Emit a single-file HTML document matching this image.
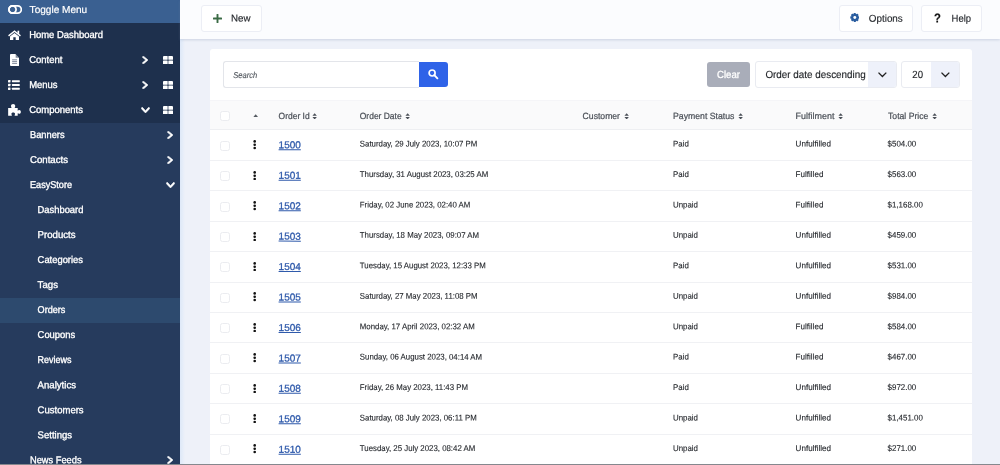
<!DOCTYPE html>
<html lang="en"><head><meta charset="utf-8"><title>Orders</title>
<style>
*{box-sizing:border-box;margin:0;padding:0}
html,body{width:1000px;height:465px;overflow:hidden}
body{font-family:"Liberation Sans",sans-serif;background:#eef1f9;position:relative;color:#212529}
div,svg,span,a{position:absolute}
.t{white-space:nowrap;height:20px;line-height:20px;transform-origin:0 50%}
#w{left:0;top:0;width:1000px;height:465px;will-change:transform}
#side{left:0;top:0;width:180px;height:465px;background:#1e304d}
#tog{left:0;top:0;width:180px;height:22.5px;background:#3a6091}
#sub{left:0;top:122.5px;width:180px;height:343px;background:#263b5d}
#act{left:0;top:297.5px;width:180px;height:25.5px;background:#2d4a6e}
#strip{left:180px;top:38px;width:5px;height:427px;background:linear-gradient(90deg,#dce7f7,rgba(238,241,249,0))}
#top{left:180px;top:0;width:820px;height:38.6px;background:#fbfcfe;box-shadow:0 1px 2.5px rgba(120,135,170,.28)}
.btn{top:5px;height:26.5px;background:#fff;border:1px solid #eceef5;border-radius:3px}
#card{left:210.3px;top:49px;width:761.7px;height:420px;background:#fff;border-radius:3px 3px 0 0}
#bottom{left:0;top:464.3px;width:1000px;height:.7px;background:#85888e}
#search{left:222.7px;top:61.1px;width:196px;height:26.6px;border:1px solid #e3e5ea;border-right:none;border-radius:3px 0 0 3px;background:#fff}
#sbtn{left:418.5px;top:61.7px;width:29.7px;height:25.5px;background:#2f63e8;border-radius:0 3px 3px 0}
#clear{left:706.9px;top:61.5px;width:42.9px;height:25.7px;background:#a9adb9;border-radius:3px}
.sel{top:61.2px;height:26.5px;border:1px solid #e9ebf1;border-radius:3px;background:#fff;overflow:hidden}
.sel i{position:absolute;right:0;top:0;bottom:0;background:#eef1fa}
#th{left:210.3px;top:99.6px;width:761.7px;height:30.7px;background:#fafafb;border-top:1px solid #f5f5f8;border-bottom:1px solid #eeeff2}
.rl{left:210.3px;width:761.7px;height:1px;background:#f0f1f4}
.cb{left:220.4px;width:10px;height:10px;border:1px solid #ebecf0;border-radius:2.5px;background:#fff}
.dots{left:253px;width:3.2px}
.dots b{display:block;width:3.2px;height:2.7px;border-radius:50%;background:#111;margin-bottom:.45px}
</style></head><body>
<div id="w">
<svg width="0" height="0"><defs>
<symbol id="cr" viewBox="10 23 290 466" preserveAspectRatio="none"><path stroke="#fff" stroke-width="30" stroke-linejoin="round" d="M285.476 272.971L91.132 467.314c-9.373 9.373-24.569 9.373-33.941 0l-22.667-22.667c-9.357-9.357-9.375-24.522-.04-33.901L188.505 256 34.484 101.255c-9.335-9.379-9.317-24.544.04-33.901l22.667-22.667c9.373-9.373 24.569-9.373 33.941 0L285.475 239.03c9.373 9.372 9.373 24.568.001 33.941z"/></symbol>
<symbol id="cd" viewBox="-9 109 466 294" preserveAspectRatio="none"><path stroke="#fff" stroke-width="30" stroke-linejoin="round" d="M207.029 381.476L12.686 187.132c-9.373-9.373-9.373-24.569 0-33.941l22.667-22.667c9.357-9.357 24.522-9.375 33.901-.04L224 284.505l154.745-154.021c9.379-9.335 24.544-9.317 33.901.04l22.667 22.667c9.373 9.373 9.373 24.569 0 33.941L240.971 381.476c-9.373 9.372-24.569 9.372-33.942 0z"/></symbol>
<symbol id="grid" viewBox="0 0 10 8.4" preserveAspectRatio="none"><rect x="0" y="0" width="4.65" height="3.85" rx=".5"/><rect x="5.35" y="0" width="4.65" height="3.85" rx=".5"/><rect x="0" y="4.55" width="4.65" height="3.85" rx=".5"/><rect x="5.35" y="4.55" width="4.65" height="3.85" rx=".5"/></symbol>
<symbol id="sort" viewBox="0 0 5 7"><path d="M0.2 2.9 L2.5 0.3 L4.8 2.9 Z M0.2 4.1 L2.5 6.7 L4.8 4.1 Z"/></symbol>
<symbol id="sr" viewBox="0 0 512 512"><path d="M505 442.7L405.3 343c-4.5-4.5-10.6-7-17-7H372c27.6-35.3 44-79.700 44-128C416 93.100 322.900 0 208 0S0 93.100 0 208s93.100 208 208 208c48.300 0 92.700-16.400 128-44v16.300c0 6.400 2.500 12.500 7 17l99.700 99.700c9.400 9.400 24.600 9.400 33.900 0l28.300-28.300c9.400-9.400 9.400-24.600.1-34zM208 336c-70.700 0-128-57.200-128-128 0-70.700 57.200-128 128-128 70.700 0 128 57.200 128 128 0 70.700-57.200 128-128 128z"/></symbol>
</defs></svg>
<div id="side"></div><div id="tog"></div><div id="sub"></div><div id="act"></div>
<svg style="left:7.9px;top:5px" width="14.2" height="9" viewBox="0 0 14.2 9" fill="none" stroke="#fff" stroke-width="1.7"><rect x=".9" y=".9" width="12.4" height="7.2" rx="3.6"/><circle cx="4.5" cy="4.5" r="3.6"/></svg>
<svg style="left:7.7px;top:29.7px" width="13" height="10.4" viewBox="0 0 13 10.4" fill="#fff" ><path d="M6.5 0.2 L12.9 5.3 L12 6.5 L6.5 2.1 L1 6.5 L0.1 5.3 Z"/><path d="M6.5 3 L11 6.6 V10.4 H7.7 V7.3 H5.3 V10.4 H2 V6.6 Z"/><rect x="9.5" y="0.7" width="1.7" height="3.2"/></svg>
<svg style="left:9.9px;top:53.9px" width="9.2" height="12" viewBox="0 0 9.5 11.5" fill="#fff" preserveAspectRatio="none"><path fill="#fff" d="M1 0 H5.6 L9.5 3.9 V10.5 Q9.5 11.5 8.5 11.5 H1 Q0 11.5 0 10.5 V1 Q0 0 1 0 Z"/><path fill="#1e304d" d="M5.9 0.2 V3.6 H9.3 Z" opacity=".55"/><path stroke="#1e304d" stroke-width=".8" opacity=".7" d="M2.2 5.6H7.3M2.2 7.3H7.3M2.2 9H7.3"/></svg>
<svg style="left:8.4px;top:80px" width="11.8" height="10" viewBox="0 0 11.8 10" fill="#fff" ><rect x="0" y="0" width="2.5" height="2.5" rx=".4"/><rect x="0" y="3.75" width="2.5" height="2.5" rx=".4"/><rect x="0" y="7.5" width="2.5" height="2.5" rx=".4"/><rect x="3.9" y="0.3" width="7.9" height="1.9" rx=".4"/><rect x="3.9" y="4.05" width="7.9" height="1.9" rx=".4"/><rect x="3.9" y="7.8" width="7.9" height="1.9" rx=".4"/></svg>
<svg style="left:7.5px;top:104.3px" width="13" height="11.7" viewBox="0 0 12.5 11.5" fill="#fff" ><path d="M0 4 H3.3 C3.3 3.2 2.8 2.9 2.8 2 C2.8 0.9 3.7 0 4.9 0 C6.1 0 7 0.9 7 2 C7 2.9 6.5 3.2 6.5 4 H9.4 V6.6 C10 6.6 10.3 6 11 6 C11.9 6 12.5 6.8 12.5 7.8 C12.5 8.8 11.9 9.6 11 9.6 C10.3 9.6 10 9 9.4 9 V11.5 H6.3 C6.3 10.8 6.8 10.5 6.8 9.8 C6.8 9 6 8.4 5 8.4 C4 8.4 3.2 9 3.2 9.8 C3.2 10.5 3.7 10.8 3.7 11.5 H0 Z"/></svg>
<svg style="left:142.3px;top:55.95px" width="6.1" height="8.1" fill="#fff"><use href="#cr"/></svg>
<svg style="left:142.3px;top:80.95px" width="6.1" height="8.1" fill="#fff"><use href="#cr"/></svg>
<svg style="left:141px;top:106.9px" width="9" height="6.2" fill="#fff"><use href="#cd"/></svg>
<svg style="left:162.8px;top:55.8px" width="10" height="8.4" fill="#fff"><use href="#grid"/></svg>
<svg style="left:162.8px;top:80.8px" width="10" height="8.4" fill="#fff"><use href="#grid"/></svg>
<svg style="left:162.8px;top:106.0px" width="10" height="8.4" fill="#fff"><use href="#grid"/></svg>
<svg style="left:167.4px;top:131.14999999999998px" width="6.1" height="8.1" fill="#fff"><use href="#cr"/></svg>
<svg style="left:167.4px;top:156.14999999999998px" width="6.1" height="8.1" fill="#fff"><use href="#cr"/></svg>
<svg style="left:167.4px;top:456.15px" width="6.1" height="8.1" fill="#fff"><use href="#cr"/></svg>
<svg style="left:165.9px;top:182.2px" width="9" height="6.2" fill="#fff"><use href="#cd"/></svg>
<div id="strip"></div><div id="top"></div>
<div class="btn" style="left:200.5px;width:61px"></div><div class="btn" style="left:838.5px;width:74.5px"></div><div class="btn" style="left:920.5px;width:61px"></div>
<svg style="left:212.5px;top:13.5px" width="9" height="9" viewBox="0 0 9 9" fill="#3b6b45" ><rect x="3.55" y="0" width="1.9" height="9" rx=".5"/><rect x="0" y="3.55" width="9" height="1.9" rx=".5"/></svg>
<svg style="left:849.5px;top:13.4px" width="9.6" height="9" viewBox="0 0 9.8 9.5" fill="#2a5d9f" ><g transform="translate(4.9 4.75)"><g><rect x="-1.2" y="-4.75" width="2.4" height="3" rx=".5" transform="rotate(0)"/><rect x="-1.2" y="-4.75" width="2.4" height="3" rx=".5" transform="rotate(45)"/><rect x="-1.2" y="-4.75" width="2.4" height="3" rx=".5" transform="rotate(90)"/><rect x="-1.2" y="-4.75" width="2.4" height="3" rx=".5" transform="rotate(135)"/><rect x="-1.2" y="-4.75" width="2.4" height="3" rx=".5" transform="rotate(180)"/><rect x="-1.2" y="-4.75" width="2.4" height="3" rx=".5" transform="rotate(225)"/><rect x="-1.2" y="-4.75" width="2.4" height="3" rx=".5" transform="rotate(270)"/><rect x="-1.2" y="-4.75" width="2.4" height="3" rx=".5" transform="rotate(315)"/></g><circle r="3.6"/><circle r="1.55" fill="#fff"/></g></svg>
<div id="card"></div>
<div id="search"></div><div id="sbtn"></div>
<svg style="left:427px;top:68px" width="13" height="13" viewBox="0 0 13 13" fill="none" stroke="#fff" stroke-width="1.7"><circle cx="5.1" cy="5" r="3"/><path d="M7.3 7.2 L10.4 10.3" stroke-linecap="round" stroke-width="1.9"/></svg>
<div id="clear"></div>
<div class="sel" style="left:755px;width:141.9px"><i style="width:28px"></i></div>
<div class="sel" style="left:901.1px;width:58.8px"><i style="width:27.5px"></i></div>
<svg style="left:878.2px;top:72px" width="8.8" height="5.9" viewBox="0 0 8.8 5.9" fill="none" stroke="#222" stroke-width="1.35"><path d="M0.5 0.6 L4.4 4.6 L8.3 0.6"/></svg>
<svg style="left:941px;top:72px" width="8.8" height="5.9" viewBox="0 0 8.8 5.9" fill="none" stroke="#222" stroke-width="1.35"><path d="M0.5 0.6 L4.4 4.6 L8.3 0.6"/></svg>
<div id="th"></div>
<div class="cb" style="top:110.5px"></div>
<svg style="left:253px;top:114px" width="5.4" height="3.4" viewBox="0 0 5.4 3.4" fill="#555a62" ><path d="M0.2 3.2 L2.7 0.3 L5.2 3.2 Z"/></svg>
<svg style="left:312.4px;top:112.6px" width="5.3" height="6.8" fill="#4b5058"><use href="#sort"/></svg>
<svg style="left:404.5px;top:112.6px" width="5.3" height="6.8" fill="#4b5058"><use href="#sort"/></svg>
<svg style="left:623.7px;top:112.6px" width="5.3" height="6.8" fill="#4b5058"><use href="#sort"/></svg>
<svg style="left:737.6px;top:112.6px" width="5.3" height="6.8" fill="#4b5058"><use href="#sort"/></svg>
<svg style="left:838px;top:112.6px" width="5.3" height="6.8" fill="#4b5058"><use href="#sort"/></svg>
<svg style="left:931.6px;top:112.6px" width="5.3" height="6.8" fill="#4b5058"><use href="#sort"/></svg>
<div class="cb" style="top:140.8px"></div>
<svg style="left:253px;top:140.4px" width="3.4" height="9.4" viewBox="0 0 3.4 9.4" fill="#111" ><circle cx="1.7" cy="1.4" r="1.3"/><circle cx="1.7" cy="4.7" r="1.3"/><circle cx="1.7" cy="8" r="1.3"/></svg>
<div class="rl" style="top:160.0px"></div>
<div class="cb" style="top:171.2px"></div>
<svg style="left:253px;top:170.8px" width="3.4" height="9.4" viewBox="0 0 3.4 9.4" fill="#111" ><circle cx="1.7" cy="1.4" r="1.3"/><circle cx="1.7" cy="4.7" r="1.3"/><circle cx="1.7" cy="8" r="1.3"/></svg>
<div class="rl" style="top:190.4px"></div>
<div class="cb" style="top:201.6px"></div>
<svg style="left:253px;top:201.2px" width="3.4" height="9.4" viewBox="0 0 3.4 9.4" fill="#111" ><circle cx="1.7" cy="1.4" r="1.3"/><circle cx="1.7" cy="4.7" r="1.3"/><circle cx="1.7" cy="8" r="1.3"/></svg>
<div class="rl" style="top:220.8px"></div>
<div class="cb" style="top:232.0px"></div>
<svg style="left:253px;top:231.6px" width="3.4" height="9.4" viewBox="0 0 3.4 9.4" fill="#111" ><circle cx="1.7" cy="1.4" r="1.3"/><circle cx="1.7" cy="4.7" r="1.3"/><circle cx="1.7" cy="8" r="1.3"/></svg>
<div class="rl" style="top:251.2px"></div>
<div class="cb" style="top:262.4px"></div>
<svg style="left:253px;top:262.0px" width="3.4" height="9.4" viewBox="0 0 3.4 9.4" fill="#111" ><circle cx="1.7" cy="1.4" r="1.3"/><circle cx="1.7" cy="4.7" r="1.3"/><circle cx="1.7" cy="8" r="1.3"/></svg>
<div class="rl" style="top:281.6px"></div>
<div class="cb" style="top:292.8px"></div>
<svg style="left:253px;top:292.4px" width="3.4" height="9.4" viewBox="0 0 3.4 9.4" fill="#111" ><circle cx="1.7" cy="1.4" r="1.3"/><circle cx="1.7" cy="4.7" r="1.3"/><circle cx="1.7" cy="8" r="1.3"/></svg>
<div class="rl" style="top:312.0px"></div>
<div class="cb" style="top:323.2px"></div>
<svg style="left:253px;top:322.8px" width="3.4" height="9.4" viewBox="0 0 3.4 9.4" fill="#111" ><circle cx="1.7" cy="1.4" r="1.3"/><circle cx="1.7" cy="4.7" r="1.3"/><circle cx="1.7" cy="8" r="1.3"/></svg>
<div class="rl" style="top:342.4px"></div>
<div class="cb" style="top:353.6px"></div>
<svg style="left:253px;top:353.2px" width="3.4" height="9.4" viewBox="0 0 3.4 9.4" fill="#111" ><circle cx="1.7" cy="1.4" r="1.3"/><circle cx="1.7" cy="4.7" r="1.3"/><circle cx="1.7" cy="8" r="1.3"/></svg>
<div class="rl" style="top:372.8px"></div>
<div class="cb" style="top:384.0px"></div>
<svg style="left:253px;top:383.6px" width="3.4" height="9.4" viewBox="0 0 3.4 9.4" fill="#111" ><circle cx="1.7" cy="1.4" r="1.3"/><circle cx="1.7" cy="4.7" r="1.3"/><circle cx="1.7" cy="8" r="1.3"/></svg>
<div class="rl" style="top:403.2px"></div>
<div class="cb" style="top:414.4px"></div>
<svg style="left:253px;top:414.0px" width="3.4" height="9.4" viewBox="0 0 3.4 9.4" fill="#111" ><circle cx="1.7" cy="1.4" r="1.3"/><circle cx="1.7" cy="4.7" r="1.3"/><circle cx="1.7" cy="8" r="1.3"/></svg>
<div class="rl" style="top:433.6px"></div>
<div class="cb" style="top:444.8px"></div>
<svg style="left:253px;top:444.4px" width="3.4" height="9.4" viewBox="0 0 3.4 9.4" fill="#111" ><circle cx="1.7" cy="1.4" r="1.3"/><circle cx="1.7" cy="4.7" r="1.3"/><circle cx="1.7" cy="8" r="1.3"/></svg>
<span class="t" style="left:29px;top:0px;font-size:10.1px;color:#fff;-webkit-text-stroke:.2px #fff;transform:translate(0.60px,0.00px) scaleX(0.9966) rotate(.03deg)">Toggle Menu</span>
<span class="t" style="left:29px;top:25px;font-size:9.9px;color:#fff;-webkit-text-stroke:.35px #fff;transform:translate(0.20px,0.05px) scaleX(0.9534) rotate(.03deg)">Home Dashboard</span>
<span class="t" style="left:29px;top:50px;font-size:9.9px;color:#fff;-webkit-text-stroke:.35px #fff;transform:translate(0.20px,0.05px) scaleX(0.9597) rotate(.03deg)">Content</span>
<span class="t" style="left:29px;top:75px;font-size:9.9px;color:#fff;-webkit-text-stroke:.35px #fff;transform:translate(0.20px,0.05px) scaleX(0.9581) rotate(.03deg)">Menus</span>
<span class="t" style="left:29px;top:100px;font-size:9.9px;color:#fff;-webkit-text-stroke:.35px #fff;transform:translate(0.20px,0.05px) scaleX(0.9607) rotate(.03deg)">Components</span>
<span class="t" style="left:30px;top:125px;font-size:9.9px;color:#fff;-webkit-text-stroke:.35px #fff;transform:translate(0.00px,0.05px) scaleX(0.9407) rotate(.03deg)">Banners</span>
<span class="t" style="left:30px;top:150px;font-size:9.9px;color:#fff;-webkit-text-stroke:.35px #fff;transform:translate(0.00px,0.05px) scaleX(0.9747) rotate(.03deg)">Contacts</span>
<span class="t" style="left:30px;top:175px;font-size:9.9px;color:#fff;-webkit-text-stroke:.35px #fff;transform:translate(0.00px,0.05px) scaleX(0.9218) rotate(.03deg)">EasyStore</span>
<span class="t" style="left:37px;top:200px;font-size:9.9px;color:#fff;-webkit-text-stroke:.35px #fff;transform:translate(0.60px,0.05px) scaleX(0.9480) rotate(.03deg)">Dashboard</span>
<span class="t" style="left:37px;top:225px;font-size:9.9px;color:#fff;-webkit-text-stroke:.35px #fff;transform:translate(0.60px,0.05px) scaleX(0.9747) rotate(.03deg)">Products</span>
<span class="t" style="left:37px;top:250px;font-size:9.9px;color:#fff;-webkit-text-stroke:.35px #fff;transform:translate(0.60px,0.05px) scaleX(0.9505) rotate(.03deg)">Categories</span>
<span class="t" style="left:37px;top:275px;font-size:9.9px;color:#fff;-webkit-text-stroke:.35px #fff;transform:translate(0.60px,0.05px) scaleX(0.9780) rotate(.03deg)">Tags</span>
<span class="t" style="left:37px;top:300px;font-size:9.9px;color:#fff;-webkit-text-stroke:.35px #fff;transform:translate(0.60px,0.05px) scaleX(0.9209) rotate(.03deg)">Orders</span>
<span class="t" style="left:37px;top:325px;font-size:9.9px;color:#fff;-webkit-text-stroke:.35px #fff;transform:translate(0.60px,0.05px) scaleX(0.9511) rotate(.03deg)">Coupons</span>
<span class="t" style="left:37px;top:350px;font-size:9.9px;color:#fff;-webkit-text-stroke:.35px #fff;transform:translate(0.60px,0.05px) scaleX(0.9082) rotate(.03deg)">Reviews</span>
<span class="t" style="left:37px;top:375px;font-size:9.9px;color:#fff;-webkit-text-stroke:.35px #fff;transform:translate(0.60px,0.25px) scaleX(0.9718) rotate(.03deg)">Analytics</span>
<span class="t" style="left:37px;top:400px;font-size:9.9px;color:#fff;-webkit-text-stroke:.35px #fff;transform:translate(0.60px,0.15px) scaleX(0.9634) rotate(.03deg)">Customers</span>
<span class="t" style="left:37px;top:425px;font-size:9.9px;color:#fff;-webkit-text-stroke:.35px #fff;transform:translate(0.60px,0.15px) scaleX(0.9639) rotate(.03deg)">Settings</span>
<span class="t" style="left:30px;top:450px;font-size:9.9px;color:#fff;-webkit-text-stroke:.35px #fff;transform:translate(0.00px,0.15px) scaleX(0.9401) rotate(.03deg)">News Feeds</span>
<span class="t" style="left:231px;top:8px;font-size:10px;color:#25282d;-webkit-text-stroke:.15px #25282d;transform:translate(0.00px,0.60px) scaleX(0.9742) rotate(.03deg)">New</span>
<span class="t" style="left:868px;top:8px;font-size:10px;color:#25282d;-webkit-text-stroke:.15px #25282d;transform:translate(0.80px,0.70px) scaleX(0.9864) rotate(.03deg)">Options</span>
<span class="t" style="left:951px;top:8px;font-size:10px;color:#25282d;-webkit-text-stroke:.15px #25282d;transform:translate(0.60px,0.70px) scaleX(0.9476) rotate(.03deg)">Help</span>
<span class="t" style="left:934px;top:8px;font-size:13px;color:#111;font-weight:bold;-webkit-text-stroke:.2px #111;transform:translate(0.10px,0.60px) scaleX(0.8676) rotate(.03deg)">?</span>
<span class="t" style="left:233px;top:65px;font-size:8.5px;color:#555a61;font-style:italic;-webkit-text-stroke:.15px #555a61;transform:translate(0.20px,0.00px) scaleX(0.8910) rotate(.03deg)">Search</span>
<span class="t" style="left:717px;top:64px;font-size:10.3px;color:#fff;-webkit-text-stroke:.3px #fff;transform:translate(0.00px,0.90px) scaleX(0.9305) rotate(.03deg)">Clear</span>
<span class="t" style="left:765px;top:64px;font-size:10.4px;color:#1f2226;-webkit-text-stroke:.15px #1f2226;transform:translate(0.40px,0.90px) scaleX(0.9487) rotate(.03deg)">Order date descending</span>
<span class="t" style="left:912px;top:64px;font-size:10.4px;color:#1f2226;-webkit-text-stroke:.15px #1f2226;transform:translate(0.30px,0.90px) scaleX(0.9254) rotate(.03deg)">20</span>
<span class="t" style="left:278px;top:105px;font-size:9px;color:#4b5058;-webkit-text-stroke:.22px #4b5058;transform:translate(0.60px,0.90px) scaleX(0.9389) rotate(.03deg)">Order Id</span>
<span class="t" style="left:359px;top:105px;font-size:9px;color:#4b5058;-webkit-text-stroke:.22px #4b5058;transform:translate(0.80px,0.90px) scaleX(0.9387) rotate(.03deg)">Order Date</span>
<span class="t" style="left:582px;top:105px;font-size:9px;color:#4b5058;-webkit-text-stroke:.22px #4b5058;transform:translate(0.60px,0.90px) scaleX(0.9586) rotate(.03deg)">Customer</span>
<span class="t" style="left:673px;top:105px;font-size:9px;color:#4b5058;-webkit-text-stroke:.22px #4b5058;transform:translate(0.00px,0.90px) scaleX(0.9662) rotate(.03deg)">Payment Status</span>
<span class="t" style="left:795px;top:105px;font-size:9px;color:#4b5058;-webkit-text-stroke:.22px #4b5058;transform:translate(0.60px,0.90px) scaleX(0.9945) rotate(.03deg)">Fulfilment</span>
<span class="t" style="left:888px;top:105px;font-size:9px;color:#4b5058;-webkit-text-stroke:.22px #4b5058;transform:translate(0.00px,0.90px) scaleX(0.9612) rotate(.03deg)">Total Price</span>
<a class="t" style="left:278px;top:135px;font-size:10px;color:#2f5aab;text-decoration:underline;text-underline-offset:1px;text-decoration-thickness:.75px;-webkit-text-stroke:.3px #2f5aab;transform:translate(0.60px,0.30px) scaleX(0.9978) rotate(.03deg)">1500</a>
<span class="t" style="left:359px;top:133px;font-size:8.3px;color:#25282d;-webkit-text-stroke:.12px #25282d;transform:translate(0.80px,0.50px) scaleX(0.9446) rotate(.03deg)">Saturday, 29 July 2023, 10:07 PM</span>
<span class="t" style="left:673px;top:133px;font-size:8.3px;color:#25282d;-webkit-text-stroke:.12px #25282d;transform:translate(0.00px,0.50px) scaleX(0.9513) rotate(.03deg)">Paid</span>
<span class="t" style="left:795px;top:133px;font-size:8.3px;color:#25282d;-webkit-text-stroke:.12px #25282d;transform:translate(0.60px,0.50px) scaleX(0.9715) rotate(.03deg)">Unfulfilled</span>
<span class="t" style="left:887px;top:133px;font-size:8.3px;color:#25282d;-webkit-text-stroke:.12px #25282d;transform:translate(0.60px,0.50px) scaleX(0.9533) rotate(.03deg)">$504.00</span>
<a class="t" style="left:278px;top:165px;font-size:10px;color:#2f5aab;text-decoration:underline;text-underline-offset:1px;text-decoration-thickness:.75px;-webkit-text-stroke:.3px #2f5aab;transform:translate(0.60px,0.74px) scaleX(0.9978) rotate(.03deg)">1501</a>
<span class="t" style="left:359px;top:163px;font-size:8.3px;color:#25282d;-webkit-text-stroke:.12px #25282d;transform:translate(0.80px,0.94px) scaleX(0.9446) rotate(.03deg)">Thursday, 31 August 2023, 03:25 AM</span>
<span class="t" style="left:673px;top:163px;font-size:8.3px;color:#25282d;-webkit-text-stroke:.12px #25282d;transform:translate(0.00px,0.94px) scaleX(0.9513) rotate(.03deg)">Paid</span>
<span class="t" style="left:795px;top:163px;font-size:8.3px;color:#25282d;-webkit-text-stroke:.12px #25282d;transform:translate(0.60px,0.94px) scaleX(0.9715) rotate(.03deg)">Fulfilled</span>
<span class="t" style="left:887px;top:163px;font-size:8.3px;color:#25282d;-webkit-text-stroke:.12px #25282d;transform:translate(0.60px,0.94px) scaleX(0.9533) rotate(.03deg)">$563.00</span>
<a class="t" style="left:278px;top:196px;font-size:10px;color:#2f5aab;text-decoration:underline;text-underline-offset:1px;text-decoration-thickness:.75px;-webkit-text-stroke:.3px #2f5aab;transform:translate(0.60px,0.18px) scaleX(0.9978) rotate(.03deg)">1502</a>
<span class="t" style="left:359px;top:194px;font-size:8.3px;color:#25282d;-webkit-text-stroke:.12px #25282d;transform:translate(0.80px,0.38px) scaleX(0.9446) rotate(.03deg)">Friday, 02 June 2023, 02:40 AM</span>
<span class="t" style="left:673px;top:194px;font-size:8.3px;color:#25282d;-webkit-text-stroke:.12px #25282d;transform:translate(0.00px,0.38px) scaleX(0.9513) rotate(.03deg)">Unpaid</span>
<span class="t" style="left:795px;top:194px;font-size:8.3px;color:#25282d;-webkit-text-stroke:.12px #25282d;transform:translate(0.60px,0.38px) scaleX(0.9715) rotate(.03deg)">Fulfilled</span>
<span class="t" style="left:887px;top:194px;font-size:8.3px;color:#25282d;-webkit-text-stroke:.12px #25282d;transform:translate(0.60px,0.38px) scaleX(0.9533) rotate(.03deg)">$1,168.00</span>
<a class="t" style="left:278px;top:226px;font-size:10px;color:#2f5aab;text-decoration:underline;text-underline-offset:1px;text-decoration-thickness:.75px;-webkit-text-stroke:.3px #2f5aab;transform:translate(0.60px,0.62px) scaleX(0.9978) rotate(.03deg)">1503</a>
<span class="t" style="left:359px;top:224px;font-size:8.3px;color:#25282d;-webkit-text-stroke:.12px #25282d;transform:translate(0.80px,0.82px) scaleX(0.9446) rotate(.03deg)">Thursday, 18 May 2023, 09:07 AM</span>
<span class="t" style="left:673px;top:224px;font-size:8.3px;color:#25282d;-webkit-text-stroke:.12px #25282d;transform:translate(0.00px,0.82px) scaleX(0.9513) rotate(.03deg)">Unpaid</span>
<span class="t" style="left:795px;top:224px;font-size:8.3px;color:#25282d;-webkit-text-stroke:.12px #25282d;transform:translate(0.60px,0.82px) scaleX(0.9715) rotate(.03deg)">Unfulfilled</span>
<span class="t" style="left:887px;top:224px;font-size:8.3px;color:#25282d;-webkit-text-stroke:.12px #25282d;transform:translate(0.60px,0.82px) scaleX(0.9533) rotate(.03deg)">$459.00</span>
<a class="t" style="left:278px;top:257px;font-size:10px;color:#2f5aab;text-decoration:underline;text-underline-offset:1px;text-decoration-thickness:.75px;-webkit-text-stroke:.3px #2f5aab;transform:translate(0.60px,0.06px) scaleX(0.9978) rotate(.03deg)">1504</a>
<span class="t" style="left:359px;top:255px;font-size:8.3px;color:#25282d;-webkit-text-stroke:.12px #25282d;transform:translate(0.80px,0.26px) scaleX(0.9446) rotate(.03deg)">Tuesday, 15 August 2023, 12:33 PM</span>
<span class="t" style="left:673px;top:255px;font-size:8.3px;color:#25282d;-webkit-text-stroke:.12px #25282d;transform:translate(0.00px,0.26px) scaleX(0.9513) rotate(.03deg)">Paid</span>
<span class="t" style="left:795px;top:255px;font-size:8.3px;color:#25282d;-webkit-text-stroke:.12px #25282d;transform:translate(0.60px,0.26px) scaleX(0.9715) rotate(.03deg)">Unfulfilled</span>
<span class="t" style="left:887px;top:255px;font-size:8.3px;color:#25282d;-webkit-text-stroke:.12px #25282d;transform:translate(0.60px,0.26px) scaleX(0.9533) rotate(.03deg)">$531.00</span>
<a class="t" style="left:278px;top:287px;font-size:10px;color:#2f5aab;text-decoration:underline;text-underline-offset:1px;text-decoration-thickness:.75px;-webkit-text-stroke:.3px #2f5aab;transform:translate(0.60px,0.50px) scaleX(0.9978) rotate(.03deg)">1505</a>
<span class="t" style="left:359px;top:285px;font-size:8.3px;color:#25282d;-webkit-text-stroke:.12px #25282d;transform:translate(0.80px,0.70px) scaleX(0.9446) rotate(.03deg)">Saturday, 27 May 2023, 11:08 PM</span>
<span class="t" style="left:673px;top:285px;font-size:8.3px;color:#25282d;-webkit-text-stroke:.12px #25282d;transform:translate(0.00px,0.70px) scaleX(0.9513) rotate(.03deg)">Unpaid</span>
<span class="t" style="left:795px;top:285px;font-size:8.3px;color:#25282d;-webkit-text-stroke:.12px #25282d;transform:translate(0.60px,0.70px) scaleX(0.9715) rotate(.03deg)">Unfulfilled</span>
<span class="t" style="left:887px;top:285px;font-size:8.3px;color:#25282d;-webkit-text-stroke:.12px #25282d;transform:translate(0.60px,0.70px) scaleX(0.9533) rotate(.03deg)">$984.00</span>
<a class="t" style="left:278px;top:317px;font-size:10px;color:#2f5aab;text-decoration:underline;text-underline-offset:1px;text-decoration-thickness:.75px;-webkit-text-stroke:.3px #2f5aab;transform:translate(0.60px,0.94px) scaleX(0.9978) rotate(.03deg)">1506</a>
<span class="t" style="left:359px;top:316px;font-size:8.3px;color:#25282d;-webkit-text-stroke:.12px #25282d;transform:translate(0.80px,0.14px) scaleX(0.9446) rotate(.03deg)">Monday, 17 April 2023, 02:32 AM</span>
<span class="t" style="left:673px;top:316px;font-size:8.3px;color:#25282d;-webkit-text-stroke:.12px #25282d;transform:translate(0.00px,0.14px) scaleX(0.9513) rotate(.03deg)">Unpaid</span>
<span class="t" style="left:795px;top:316px;font-size:8.3px;color:#25282d;-webkit-text-stroke:.12px #25282d;transform:translate(0.60px,0.14px) scaleX(0.9715) rotate(.03deg)">Fulfilled</span>
<span class="t" style="left:887px;top:316px;font-size:8.3px;color:#25282d;-webkit-text-stroke:.12px #25282d;transform:translate(0.60px,0.14px) scaleX(0.9533) rotate(.03deg)">$584.00</span>
<a class="t" style="left:278px;top:348px;font-size:10px;color:#2f5aab;text-decoration:underline;text-underline-offset:1px;text-decoration-thickness:.75px;-webkit-text-stroke:.3px #2f5aab;transform:translate(0.60px,0.38px) scaleX(0.9978) rotate(.03deg)">1507</a>
<span class="t" style="left:359px;top:346px;font-size:8.3px;color:#25282d;-webkit-text-stroke:.12px #25282d;transform:translate(0.80px,0.58px) scaleX(0.9446) rotate(.03deg)">Sunday, 06 August 2023, 04:14 AM</span>
<span class="t" style="left:673px;top:346px;font-size:8.3px;color:#25282d;-webkit-text-stroke:.12px #25282d;transform:translate(0.00px,0.58px) scaleX(0.9513) rotate(.03deg)">Paid</span>
<span class="t" style="left:795px;top:346px;font-size:8.3px;color:#25282d;-webkit-text-stroke:.12px #25282d;transform:translate(0.60px,0.58px) scaleX(0.9715) rotate(.03deg)">Fulfilled</span>
<span class="t" style="left:887px;top:346px;font-size:8.3px;color:#25282d;-webkit-text-stroke:.12px #25282d;transform:translate(0.60px,0.58px) scaleX(0.9533) rotate(.03deg)">$467.00</span>
<a class="t" style="left:278px;top:378px;font-size:10px;color:#2f5aab;text-decoration:underline;text-underline-offset:1px;text-decoration-thickness:.75px;-webkit-text-stroke:.3px #2f5aab;transform:translate(0.60px,0.82px) scaleX(0.9978) rotate(.03deg)">1508</a>
<span class="t" style="left:359px;top:377px;font-size:8.3px;color:#25282d;-webkit-text-stroke:.12px #25282d;transform:translate(0.80px,0.02px) scaleX(0.9446) rotate(.03deg)">Friday, 26 May 2023, 11:43 PM</span>
<span class="t" style="left:673px;top:377px;font-size:8.3px;color:#25282d;-webkit-text-stroke:.12px #25282d;transform:translate(0.00px,0.02px) scaleX(0.9513) rotate(.03deg)">Paid</span>
<span class="t" style="left:795px;top:377px;font-size:8.3px;color:#25282d;-webkit-text-stroke:.12px #25282d;transform:translate(0.60px,0.02px) scaleX(0.9715) rotate(.03deg)">Unfulfilled</span>
<span class="t" style="left:887px;top:377px;font-size:8.3px;color:#25282d;-webkit-text-stroke:.12px #25282d;transform:translate(0.60px,0.02px) scaleX(0.9533) rotate(.03deg)">$972.00</span>
<a class="t" style="left:278px;top:409px;font-size:10px;color:#2f5aab;text-decoration:underline;text-underline-offset:1px;text-decoration-thickness:.75px;-webkit-text-stroke:.3px #2f5aab;transform:translate(0.60px,0.26px) scaleX(0.9978) rotate(.03deg)">1509</a>
<span class="t" style="left:359px;top:407px;font-size:8.3px;color:#25282d;-webkit-text-stroke:.12px #25282d;transform:translate(0.80px,0.46px) scaleX(0.9446) rotate(.03deg)">Saturday, 08 July 2023, 06:11 PM</span>
<span class="t" style="left:673px;top:407px;font-size:8.3px;color:#25282d;-webkit-text-stroke:.12px #25282d;transform:translate(0.00px,0.46px) scaleX(0.9513) rotate(.03deg)">Unpaid</span>
<span class="t" style="left:795px;top:407px;font-size:8.3px;color:#25282d;-webkit-text-stroke:.12px #25282d;transform:translate(0.60px,0.46px) scaleX(0.9715) rotate(.03deg)">Unfulfilled</span>
<span class="t" style="left:887px;top:407px;font-size:8.3px;color:#25282d;-webkit-text-stroke:.12px #25282d;transform:translate(0.60px,0.46px) scaleX(0.9533) rotate(.03deg)">$1,451.00</span>
<a class="t" style="left:278px;top:439px;font-size:10px;color:#2f5aab;text-decoration:underline;text-underline-offset:1px;text-decoration-thickness:.75px;-webkit-text-stroke:.3px #2f5aab;transform:translate(0.60px,0.70px) scaleX(0.9978) rotate(.03deg)">1510</a>
<span class="t" style="left:359px;top:437px;font-size:8.3px;color:#25282d;-webkit-text-stroke:.12px #25282d;transform:translate(0.80px,0.90px) scaleX(0.9446) rotate(.03deg)">Tuesday, 25 July 2023, 08:42 AM</span>
<span class="t" style="left:673px;top:437px;font-size:8.3px;color:#25282d;-webkit-text-stroke:.12px #25282d;transform:translate(0.00px,0.90px) scaleX(0.9513) rotate(.03deg)">Unpaid</span>
<span class="t" style="left:795px;top:437px;font-size:8.3px;color:#25282d;-webkit-text-stroke:.12px #25282d;transform:translate(0.60px,0.90px) scaleX(0.9715) rotate(.03deg)">Unfulfilled</span>
<span class="t" style="left:887px;top:437px;font-size:8.3px;color:#25282d;-webkit-text-stroke:.12px #25282d;transform:translate(0.60px,0.90px) scaleX(0.9533) rotate(.03deg)">$271.00</span>
<div id="bottom"></div>
</div>
</body></html>
